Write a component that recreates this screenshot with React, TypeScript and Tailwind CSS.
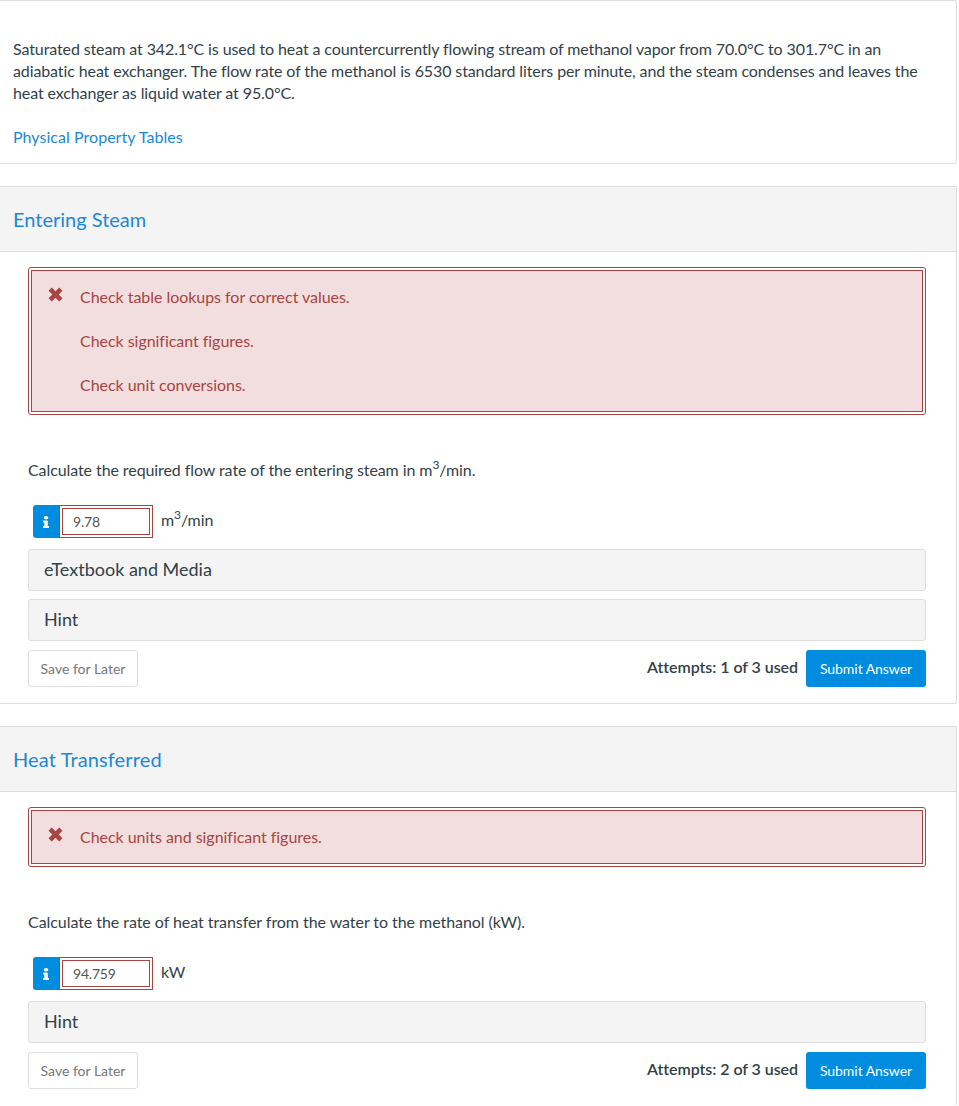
import type { ReactNode } from "react";
import { FaInfo } from "react-icons/fa";

const Sup3 = () => <sup className="static text-[12px] leading-none align-[7px]">3</sup>;

function Feedback({ items }: { items: string[] }) {
  return (
    <div className="border border-[#a94442] rounded-[3px] p-[2px]">
      <div className="border border-[#a94442] bg-[#f2dede] text-[#a94442] pl-[48px] py-[4px] relative">
        <svg viewBox="1 1 14 14" className="absolute left-[16px] top-[16px] w-[15px] h-[15px]">
          <path d="M1.5 4.5 4.5 1.5 8 5l3.5-3.5 3 3L11 8l3.5 3.5-3 3L8 11l-3.5 3.5-3-3L5 8z" fill="#a94442" />
        </svg>
        {items.map((t) => (
          <p key={t} className="h-[44px] leading-[44px] text-[16px] tracking-[-0.04px]">{t}</p>
        ))}
      </div>
    </div>
  );
}

function AnswerInput({ value, unit }: { value: string; unit: ReactNode }) {
  return (
    <div className="flex items-start ml-[5px] h-[33px]">
      <div className="w-[26px] h-[33px] bg-[#008cdf] rounded-l-[3px] flex items-center justify-center text-white">
        <FaInfo className="w-[6px] h-[12px]" preserveAspectRatio="none" />
      </div>
      <div className="w-[94px] h-[33px] border border-[#a94442] p-[2px]">
        <div className="h-full border border-[#a94442] pl-[10px] text-[14px] tracking-[-0.2px] leading-[26px] text-[#555]">{value}</div>
      </div>
      <span className="ml-[8px] text-[16px] tracking-[-0.1px] leading-[30px] text-[#333f48]">{unit}</span>
    </div>
  );
}

function Accordion({ label }: { label: string }) {
  return (
    <div className="h-[42px] bg-[#f4f4f4] border border-[#ddd] rounded-[3px] pl-[15px] text-[18px] leading-[38px] text-[#333f48]">
      {label}
    </div>
  );
}

function Footer({ attempts }: { attempts: string }) {
  return (
    <div className="flex justify-between items-start">
      <button className="h-[37px] w-[110px] bg-white border border-[#ddd] rounded-[3px] text-[14px] text-[#777]">
        Save for Later
      </button>
      <div className="flex items-start gap-[8px]">
        <span className="text-[16px] font-semibold tracking-[-0.05px] leading-[34px] text-[#333f48]">{attempts}</span>
        <button className="h-[37px] w-[120px] bg-[#008cdf] rounded-[3px] text-[14px] tracking-[-0.05px] text-white">Submit Answer</button>
      </div>
    </div>
  );
}

export default function App() {
  return (
    <div className="w-[959px] h-[1106px] overflow-hidden bg-white font-['Lato',sans-serif] text-[#333f48] text-[16px]">
      <div className="w-[957px] h-[164px] border border-l-0 border-[#ddd] rounded-r-[3px] pl-[13px] pr-[20px] pt-[37px]">
        <p className="leading-[22px] tracking-[-0.11px]">
          Saturated steam at 342.1°C is used to heat a countercurrently flowing stream of methanol vapor from 70.0°C to 301.7°C in an adiabatic heat exchanger. The flow rate of the methanol is 6530 standard liters per minute, and the steam condenses and leaves the heat exchanger as liquid water at 95.0°C.
        </p>
        <a className="block mt-[22px] leading-[22px] tracking-[0.04px] text-[#1c87d8]">Physical Property Tables</a>
      </div>

      <div className="w-[957px] h-[518px] mt-[22px] border-r border-b border-[#ddd] rounded-br-[3px]">
        <div className="h-[66px] bg-[#f4f4f4] border-y border-[#ddd] pl-[13px] text-[20px] leading-[65px] text-[#1c87d8]">
          Entering Steam
        </div>
        <div className="pl-[28px] pr-[30px] pt-[15px]">
          <Feedback items={["Check table lookups for correct values.", "Check significant figures.", "Check unit conversions."]} />
          <p className="mt-[43px] leading-[24px] tracking-[-0.085px]">
            Calculate the required flow rate of the entering steam in m<Sup3 />/min.
          </p>
          <div className="mt-[23px]">
            <AnswerInput value="9.78" unit={<>m<Sup3 />/min</>} />
          </div>
          <div className="mt-[11px] flex flex-col gap-[8px]">
            <Accordion label="eTextbook and Media" />
            <Accordion label="Hint" />
          </div>
          <div className="mt-[9px]">
            <Footer attempts="Attempts: 1 of 3 used" />
          </div>
        </div>
      </div>

      <div className="w-[957px] mt-[22px] border-r border-[#ddd]">
        <div className="h-[66px] bg-[#f4f4f4] border-y border-[#ddd] pl-[13px] text-[20px] tracking-[0.13px] leading-[65px] text-[#1c87d8]">
          Heat Transferred
        </div>
        <div className="pl-[28px] pr-[30px] pt-[15px] pb-[16px]">
          <Feedback items={["Check units and significant figures."]} />
          <p className="mt-[43px] leading-[24px] tracking-[-0.055px]">Calculate the rate of heat transfer from the water to the methanol (kW).</p>
          <div className="mt-[23px]">
            <AnswerInput value="94.759" unit="kW" />
          </div>
          <div className="mt-[11px]">
            <Accordion label="Hint" />
          </div>
          <div className="mt-[9px]">
            <Footer attempts="Attempts: 2 of 3 used" />
          </div>
        </div>
      </div>
    </div>
  );
}
